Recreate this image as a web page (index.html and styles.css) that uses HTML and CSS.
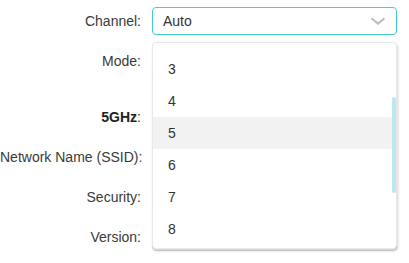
FILE: index.html
```html
<!DOCTYPE html>
<html lang="en">
<head>
<meta charset="UTF-8" />
<meta name="viewport" content="width=device-width, initial-scale=1" />
<title>Wireless Settings</title>
<link rel="stylesheet" href="styles.css">
</head>
<body>
  <div class="form">
    <div class="row">
      <label class="label">Channel:</label>
      <div class="control">
        <div class="select open">
          <span class="value">Auto</span>
          <svg class="arrow" width="16" height="8" viewBox="0 0 16 8">
            <path d="M1.5 1.2 L8 6.6 L14.5 1.2" fill="none" stroke="#bdbdbd" stroke-width="2" />
          </svg>
        </div>
        <div class="dropdown">
          <ul class="options">
            <li>3</li>
            <li>4</li>
            <li class="hover">5</li>
            <li>6</li>
            <li>7</li>
            <li>8</li>
          </ul>
          <div class="thumb"></div>
        </div>
      </div>
    </div>
    <div class="row">
      <label class="label">Mode:</label>
      <div class="control"><div class="input"></div></div>
    </div>
    <div class="row section">
      <label class="label"><b>5GHz</b>:</label>
      <div class="control"></div>
    </div>
    <div class="row">
      <label class="label">Network Name (SSID):</label>
      <div class="control"><div class="input"></div></div>
    </div>
    <div class="row">
      <label class="label">Security:</label>
      <div class="control"><div class="input"></div></div>
    </div>
    <div class="row">
      <label class="label">Version:</label>
      <div class="control"><div class="input"></div></div>
    </div>
    <div class="row">
      <label class="label"></label>
      <div class="control"><div class="input"></div></div>
    </div>
  </div>
</body>
</html>
```

FILE: styles.css
```css
body {
  margin: 0;
  font-family: 'Liberation Sans', Arial, sans-serif;
  font-size: 14px;
  color: #333;
  background: #fff;
  overflow: hidden;
}
.form {
  padding-top: 1px;
}
.row {
  display: flex;
  align-items: center;
  height: 40px;
}
.row.section {
  margin-top: 16px;
}
.label {
  width: 141px;
  flex-shrink: 0;
  text-align: right;
  white-space: nowrap;
  color: #3a3a3a;
}
.label b {
  color: #222;
}
.control {
  position: relative;
  margin-left: 11px;
  width: 245px;
}
.select {
  height: 28px;
  box-sizing: border-box;
  border: 1px solid #45c9d6;
  border-radius: 4px;
  display: flex;
  align-items: center;
  padding: 0 10px;
  justify-content: space-between;
}
.select .value {
  color: #333;
}
.input {
  height: 28px;
  box-sizing: border-box;
  border: 1px solid #dcdcdc;
  border-radius: 4px;
}
.dropdown {
  position: absolute;
  top: 35px;
  left: 0;
  width: 245px;
  height: 207px;
  box-sizing: border-box;
  background: #fff;
  border: 1px solid #e8e8e8;
  border-radius: 4px;
  box-shadow: 1px 2px 3px rgba(0, 0, 0, 0.18);
  overflow: hidden;
  z-index: 10;
}
.options {
  list-style: none;
  margin: 0;
  padding: 10px 0 0 0;
}
.options li {
  height: 32px;
  line-height: 32px;
  padding-left: 15px;
  color: #333;
}
.options li.hover {
  background: #f2f2f2;
}
.thumb {
  position: absolute;
  top: 54px;
  right: 0;
  width: 4px;
  height: 96px;
  border-radius: 2px;
  background: #bde9ed;
}
```
